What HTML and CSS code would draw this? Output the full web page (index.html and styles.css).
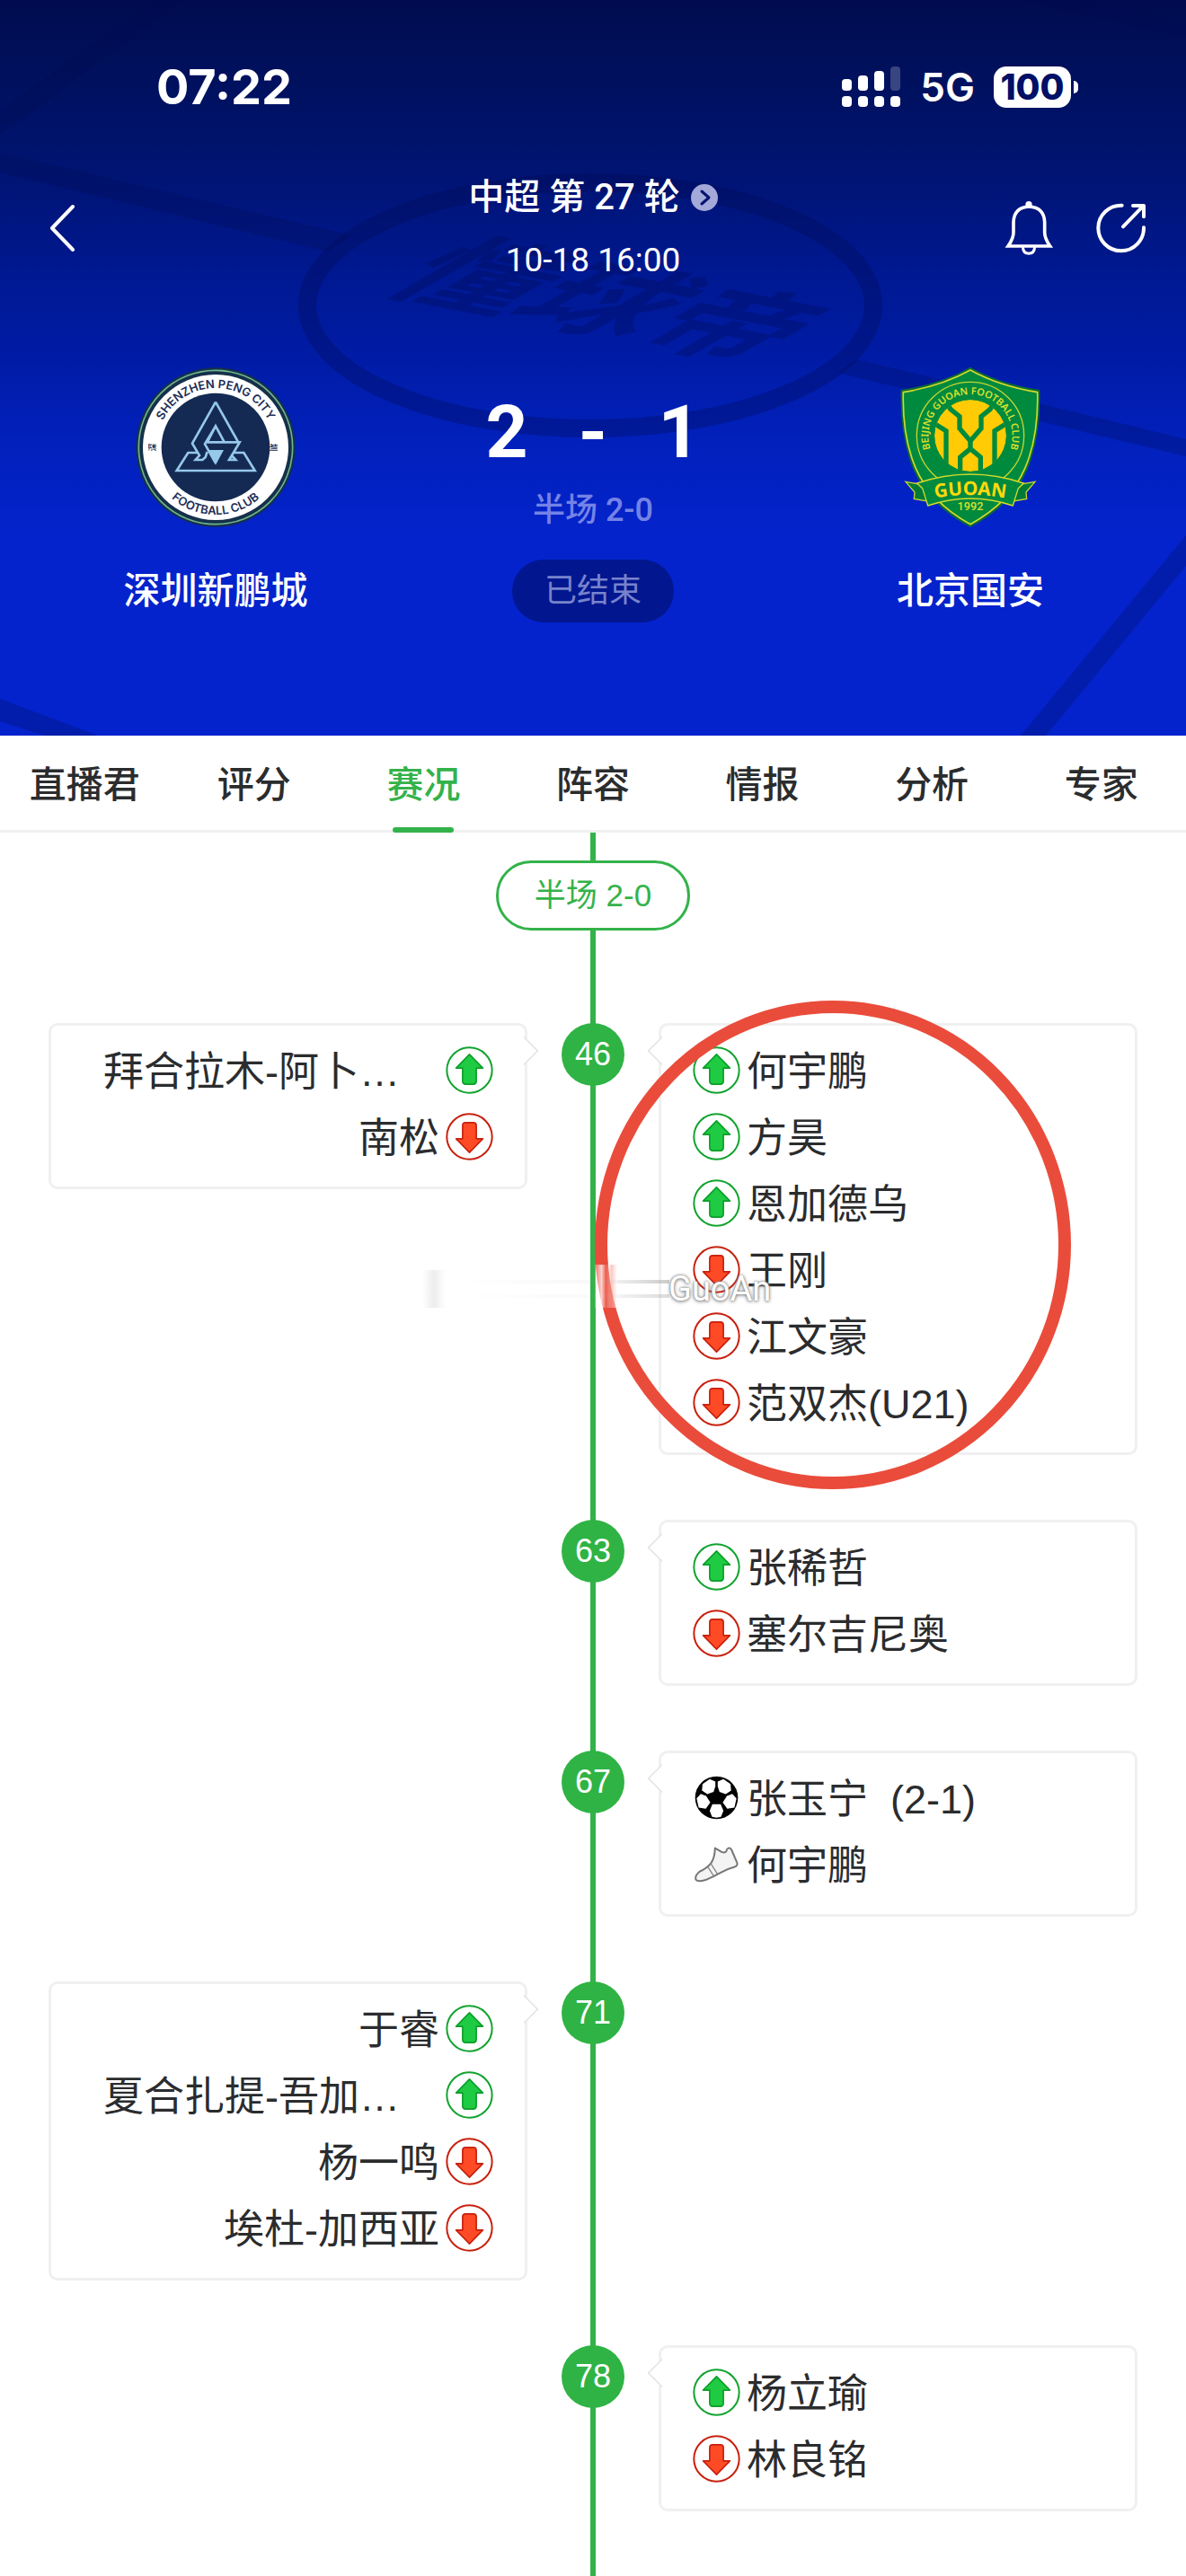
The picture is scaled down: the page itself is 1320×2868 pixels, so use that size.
FILE: index.html
```html
<!DOCTYPE html>
<html lang="zh-CN">
<head>
<meta charset="utf-8">
<meta name="viewport" content="width=device-width, initial-scale=1">
<title>深圳新鹏城 2-1 北京国安</title>
<link rel="stylesheet" href="styles.css">
</head>
<body>
<svg class="sprite" aria-hidden="true">
  <symbol id="sub-in" viewBox="0 0 160 160">
    <circle cx="80" cy="80" r="76" fill="#fff" stroke="#12a32f" stroke-width="6"/>
    <path d="M80 27 L125 73 H103 V117 Q103 127 93 127 H67 Q57 127 57 117 V73 H35 Z" fill="#1ecb43" stroke="#0c9f2a" stroke-width="5" stroke-linejoin="round"/>
  </symbol>
  <symbol id="sub-out" viewBox="0 0 160 160">
    <circle cx="80" cy="80" r="76" fill="#fff" stroke="#c8200e" stroke-width="6"/>
    <path d="M80 133 L125 87 H103 V43 Q103 33 93 33 H67 Q57 33 57 43 V87 H35 Z" fill="#ff4a26" stroke="#c8200e" stroke-width="5" stroke-linejoin="round"/>
  </symbol>
  <symbol id="goal" viewBox="0 0 160 160">
    <circle cx="80" cy="80" r="72" fill="#000"/>
    <g fill="#fff">
      <path d="M76 42 V26 L57 17 L33 34 L31 56 L49 68 L70 60 Z"/>
      <path d="M84 42 V26 L103 17 L127 34 L129 56 L111 68 L90 60 Z"/>
      <path d="M45 74 L27 67 L13 82 L20 113 L44 117 L59 96 Z"/>
      <path d="M115 74 L133 67 L147 82 L140 113 L116 117 L101 96 Z"/>
      <path d="M66 102 H94 L103 124 L95 144 L80 147 L65 144 L57 124 Z"/>
    </g>
  </symbol>
  <symbol id="assist" viewBox="0 0 160 160">
    <path d="M75 26 Q85 31 97 39 Q109 43 113 36 Q114 28 120 26 Q126 24 130 31 L149 75 Q152 85 141 89 Q115 96 94 108 Q70 122 43 133 Q15 141 10 131 Q7 118 23 105 Q48 94 62 76 Q74 58 75 26 Z" fill="#f4f4f4" stroke="#777" stroke-width="6" stroke-linejoin="round"/>
    <path d="M61 78 L83 113 M50 88 L70 119" fill="none" stroke="#888" stroke-width="4"/>
  </symbol>
</svg>

<header class="match">
  <svg class="pitch" viewBox="0 0 1320 819" preserveAspectRatio="xMidYMid slice" aria-hidden="true">
    <g class="pitch-lines">
      <path d="M172 0 H204 L0 150 V123 Z"/>
      <path d="M0 170 L391 262 L364 280 L0 192 Z"/>
      <path d="M1136 0 H1204 L1320 25 V42 Z"/>
      <path d="M953 400 L1320 489 V508 L932 415 Z"/>
      <path d="M1320 596 V630 L1164 819 H1136 Z"/>
      <path d="M0 778 L109 819 H50 L0 803 Z"/>
    </g>
    <ellipse class="pitch-circle" cx="657" cy="340" rx="315" ry="137"/>
    <text class="pitch-mark" transform="matrix(1.4 .27 -1.3 .75 420 322)">懂球帝</text>
  </svg>

  <div class="status">
    <span class="clock">07:22</span>
    <div class="status-right">
      <svg class="signal" viewBox="0 0 66 46" aria-label="信号">
        <g fill="#fff">
          <rect x="0" y="14" width="11" height="13" rx="4"/><rect x="18" y="10" width="11" height="17" rx="4"/><rect x="36" y="5" width="11" height="22" rx="4"/>
          <rect x="54" y="0" width="11" height="27" rx="4" opacity=".22"/>
          <rect x="0" y="33" width="11" height="12" rx="4"/><rect x="18" y="33" width="11" height="12" rx="4"/><rect x="36" y="33" width="11" height="12" rx="4"/><rect x="54" y="33" width="11" height="12" rx="4"/>
        </g>
      </svg>
      <span class="network">5G</span>
      <span class="battery">100</span>
    </div>
  </div>

  <div class="nav">
    <button class="icon-button icon-button-back" type="button" aria-label="返回">
      <svg class="icon-back" viewBox="0 0 30 54"><path d="M27 3 L4 27 L27 51" fill="none" stroke="#fff" stroke-width="4" stroke-linecap="round" stroke-linejoin="round"/></svg>
    </button>
    <div class="heading">
      <a class="round" href="#league">中超 第 27 轮
        <svg class="icon-more" viewBox="0 0 30 30" aria-hidden="true"><circle cx="15" cy="15" r="15" fill="#a3a9d8"/><path d="M12 8 L20 15 L12 22" fill="none" stroke="#07136f" stroke-width="3" stroke-linecap="round" stroke-linejoin="round"/></svg>
      </a>
      <time class="kickoff">10-18 16:00</time>
    </div>
    <div class="nav-actions">
      <button class="icon-button" type="button" aria-label="提醒">
        <svg class="icon-action" viewBox="54 66 180 180" fill="none" stroke="#fff" stroke-width="11">
          <path d="M66 216 Q84 190 84 170 V136 Q86 86 136 84 Q186 86 188 136 V170 Q188 190 206 216 Z"/>
          <path d="M115 218 Q116 241 135 241 Q154 241 155 218" stroke-width="9"/>
          <circle cx="135" cy="77" r="11" fill="#fff" stroke="none"/>
        </svg>
      </button>
      <button class="icon-button" type="button" aria-label="分享">
        <svg class="icon-action" viewBox="354 66 180 180" fill="none" stroke="#fff" stroke-width="12" stroke-linecap="round" stroke-linejoin="round">
          <path d="M446 80 A76 76 0 1 0 519 154 M450 151 L517 82 M483 81 H519 V118"/>
        </svg>
      </button>
    </div>
  </div>

  <div class="teams">
    <div class="team">
      <svg class="crest" viewBox="60 55 540 540" role="img" aria-label="Shenzhen Peng City">
        <defs><path id="sz-top" d="M132 325 A198 198 0 0 1 528 325"/><path id="sz-bottom" d="M105 325 A225 225 0 0 0 555 325"/></defs>
        <circle cx="330" cy="325" r="266" fill="#15304a"/>
        <circle cx="330" cy="325" r="257" fill="none" stroke="#6fb58c" stroke-width="5"/>
        <circle cx="330" cy="325" r="243" fill="#fff"/>
        <circle cx="330" cy="325" r="181" fill="#152a52"/>
        <g class="sz-text">
          <text><textPath href="#sz-top" startOffset="50%">SHENZHEN PENG CITY</textPath></text>
          <text><textPath href="#sz-bottom" startOffset="50%">FOOTBALL CLUB</textPath></text>
        </g>
        <text class="sz-cjk" transform="translate(130 325) rotate(-90)">深</text>
        <text class="sz-cjk" transform="translate(532 325) rotate(90)" dy="20">圳</text>
        <g fill="none" stroke="#96c8ec" stroke-width="8">
          <path d="M330 174 L252 312 L276 352 L263 367 H286 L296 358 L302 340 M330 174 L408 312 L375 367 H397 L384 352 L410 308 H302 L330 254 L358 306 M330 254 L294 314 L330 378"/>
          <path d="M270 343 H238 L200 403 H461 L424 343 H390"/>
        </g>
        <path d="M304 334 H357 L330 384 Z" fill="#96c8ec"/>
      </svg>
      <span class="team-name">深圳新鹏城</span>
    </div>
    <div class="result">
      <div class="score"><span>2</span><span>-</span><span>1</span></div>
      <span class="half">半场 2-0</span>
      <span class="state">已结束</span>
    </div>
    <div class="team">
      <svg class="crest" viewBox="30 55 540 540" role="img" aria-label="Beijing Guoan">
        <defs>
          <path id="ga-ring" d="M198 384 A140 140 0 1 1 402 384"/>
          <path id="ga-band" d="M150 502 Q300 466 450 502"/>
          <clipPath id="ga-ball"><circle cx="300" cy="286" r="120"/></clipPath>
        </defs>
        <path d="M300 57 Q395 112 532 133 Q536 290 490 400 Q440 518 300 592 Q160 518 110 400 Q64 290 68 133 Q205 112 300 57 Z" fill="#0a6b35"/>
        <path d="M300 67 Q395 120 524 141 Q528 290 482 396 Q432 510 300 582 Q168 510 118 396 Q72 290 76 141 Q205 120 300 67 Z" fill="#008a3e" stroke="#d2da2c" stroke-width="5"/>
        <circle cx="300" cy="286" r="179" fill="#008a3e" stroke="#c6d62f" stroke-width="4"/>
        <text class="ga-ring-text"><textPath href="#ga-ring" startOffset="50%">BEIJING GUOAN FOOTBALL CLUB</textPath></text>
        <g clip-path="url(#ga-ball)">
          <circle cx="300" cy="286" r="120" fill="#ffcb05"/>
          <g fill="none" stroke="#008a3e" stroke-width="16">
            <path d="M218 172 L234 198 L264 222 V262 L300 304 L336 262 V222 L366 198 L382 172"/>
            <path d="M300 300 V330 L266 358 V420 M300 330 L334 358 V420"/>
            <path d="M170 240 L219 270 V420 M430 240 L381 270 V420"/>
          </g>
        </g>
        <path d="M84 440 L140 450 L155 505 L112 497 L114 475 Z M516 440 L460 450 L445 505 L488 497 L486 475 Z" fill="#007a37" stroke="#c6d62f" stroke-width="4"/>
        <path d="M122 445 Q300 385 478 445 L460 462 L442 520 Q300 472 158 520 L140 462 Z" fill="#008a3e" stroke="#d2da2c" stroke-width="4"/>
        <text class="ga-name"><textPath href="#ga-band" startOffset="50%">GUOAN</textPath></text>
        <text class="ga-year" x="300" y="536">1992</text>
      </svg>
      <span class="team-name">北京国安</span>
    </div>
  </div>
</header>

<nav class="tabs">
  <a class="tab" href="#live">直播君</a>
  <a class="tab" href="#ratings">评分</a>
  <a class="tab tab-active" href="#events" aria-current="page">赛况</a>
  <a class="tab" href="#lineup">阵容</a>
  <a class="tab" href="#info">情报</a>
  <a class="tab" href="#analysis">分析</a>
  <a class="tab" href="#experts">专家</a>
</nav>

<main class="timeline" id="events">
  <div class="break">半场 2-0</div>
  <ol class="events">
    <li class="event">
      <ul class="card card-home">
        <li class="line"><span class="name name-clipped">拜合拉木-阿卜…</span><svg class="mark"><use href="#sub-in"/></svg></li>
        <li class="line"><span class="name">南松</span><svg class="mark"><use href="#sub-out"/></svg></li>
      </ul>
      <span class="minute">46</span>
      <ul class="card card-away">
        <li class="line"><svg class="mark"><use href="#sub-in"/></svg><span class="name">何宇鹏</span></li>
        <li class="line"><svg class="mark"><use href="#sub-in"/></svg><span class="name">方昊</span></li>
        <li class="line"><svg class="mark"><use href="#sub-in"/></svg><span class="name">恩加德乌</span></li>
        <li class="line"><svg class="mark"><use href="#sub-out"/></svg><span class="name">王刚</span></li>
        <li class="line"><svg class="mark"><use href="#sub-out"/></svg><span class="name">江文豪</span></li>
        <li class="line"><svg class="mark"><use href="#sub-out"/></svg><span class="name">范双杰(U21)</span></li>
        <li class="highlight">
          <svg class="ring" viewBox="0 0 530 545" aria-hidden="true"><ellipse cx="265" cy="272" rx="258" ry="265" fill="none" stroke="#ea4c3b" stroke-width="14"/></svg>
          <svg class="smear" viewBox="0 0 300 48" aria-hidden="true">
            <defs>
              <linearGradient id="streak"><stop offset="0" stop-color="#999" stop-opacity="0"/><stop offset=".7" stop-color="#999" stop-opacity=".08"/><stop offset="1" stop-color="#999" stop-opacity=".5"/></linearGradient>
              <linearGradient id="block"><stop offset="0" stop-color="#ccc" stop-opacity="0"/><stop offset=".5" stop-color="#ccc" stop-opacity=".35"/><stop offset="1" stop-color="#ccc" stop-opacity="0"/></linearGradient>
              <linearGradient id="veil"><stop offset="0" stop-color="#fff" stop-opacity=".2"/><stop offset=".3" stop-color="#fff" stop-opacity=".75"/><stop offset=".5" stop-color="#fff" stop-opacity=".1"/><stop offset=".75" stop-color="#f6a59c" stop-opacity=".6"/><stop offset="1" stop-color="#fff" stop-opacity=".5"/></linearGradient>
            </defs>
            <rect x="10" y="6" width="26" height="42" fill="url(#block)"/>
            <rect x="50" y="17" width="235" height="4" fill="url(#streak)"/>
            <rect x="50" y="33" width="235" height="4" fill="url(#streak)" opacity=".7"/>
            <rect x="202" y="0" width="25" height="48" fill="url(#veil)"/>
          </svg>
          <span class="signature">GuoAn</span>
        </li>
      </ul>
    </li>
    <li class="event">
      <span class="minute">63</span>
      <ul class="card card-away">
        <li class="line"><svg class="mark"><use href="#sub-in"/></svg><span class="name">张稀哲</span></li>
        <li class="line"><svg class="mark"><use href="#sub-out"/></svg><span class="name">塞尔吉尼奥</span></li>
      </ul>
    </li>
    <li class="event">
      <span class="minute">67</span>
      <ul class="card card-away">
        <li class="line"><svg class="mark"><use href="#goal"/></svg><span class="name">张玉宁&nbsp; (2-1)</span></li>
        <li class="line"><svg class="mark"><use href="#assist"/></svg><span class="name">何宇鹏</span></li>
      </ul>
    </li>
    <li class="event">
      <ul class="card card-home">
        <li class="line"><span class="name">于睿</span><svg class="mark"><use href="#sub-in"/></svg></li>
        <li class="line"><span class="name name-clipped">夏合扎提-吾加…</span><svg class="mark"><use href="#sub-in"/></svg></li>
        <li class="line"><span class="name">杨一鸣</span><svg class="mark"><use href="#sub-out"/></svg></li>
        <li class="line"><span class="name">埃杜-加西亚</span><svg class="mark"><use href="#sub-out"/></svg></li>
      </ul>
      <span class="minute">71</span>
    </li>
    <li class="event">
      <span class="minute">78</span>
      <ul class="card card-away">
        <li class="line"><svg class="mark"><use href="#sub-in"/></svg><span class="name">杨立瑜</span></li>
        <li class="line"><svg class="mark"><use href="#sub-out"/></svg><span class="name">林良铭</span></li>
      </ul>
    </li>
  </ol>
</main>
</body>
</html>
```
FILE: styles.css
```css
* { box-sizing: border-box; }

body {
  margin: 0;
  background: #fff;
  color: #2b2c2e;
  font-family: "Liberation Sans", "Noto Sans CJK SC", sans-serif;
}

a { color: inherit; text-decoration: none; }
ul, ol { margin: 0; padding: 0; list-style: none; }
svg { display: block; }
.sprite { display: none; }

/* Match header */
.match {
  position: relative;
  padding-bottom: 126px;
  overflow: hidden;
  color: #fff;
  font-family: Roboto, "Noto Sans CJK SC", sans-serif;
  background: linear-gradient(#000c4e 0, #001160 100px, #001474 200px, #001890 300px, #001ca6 400px, #0221bd 500px, #0423cc 600px);
}

.pitch { position: absolute; inset: 0; width: 100%; height: 100%; }
.pitch-lines { fill: #000a50; fill-opacity: .26; }
.pitch-circle { fill: none; stroke: #000a50; stroke-opacity: .3; stroke-width: 20; }
.pitch-mark {
  fill: #000a50;
  fill-opacity: .3;
  font: 700 100px "Noto Sans CJK SC", sans-serif;
}

.status {
  position: relative;
  display: flex;
  justify-content: space-between;
  padding: 65px 128px 54px 174px;
  line-height: 64px;
  font-family: Inter, sans-serif;
}
.clock { font-size: 54px; font-weight: 700; }
.status-right { display: flex; align-items: center; }
.signal { width: 66px; height: 46px; }
.network { margin: 0 21px; font-size: 44px; font-weight: 600; }
.battery {
  position: relative;
  width: 86px;
  border-radius: 14px;
  background: #fff;
  color: #001066;
  font-size: 39px;
  font-weight: 800;
  line-height: 46px;
  text-align: center;
}
.battery::after {
  content: "";
  position: absolute;
  top: 16px;
  right: -8px;
  width: 5px;
  height: 14px;
  border-radius: 0 5px 5px 0;
  background: #fff;
}

.nav {
  position: relative;
  display: grid;
  grid-template-columns: 1fr auto 1fr;
  align-items: center;
  padding: 0 42px;
}
.icon-button {
  padding: 0;
  border: 0;
  background: none;
  justify-self: start;
  cursor: pointer;
}
.icon-button-back { padding-left: 12px; }
.icon-back { width: 30px; height: 54px; }
.icon-action { width: 60px; height: 60px; }
.heading { display: flex; flex-direction: column; align-items: center; line-height: 70px; }
.round { display: flex; align-items: center; gap: 12px; padding-top: 2px; font-size: 40px; font-weight: 500; }
.icon-more { width: 30px; height: 30px; }
.kickoff { font-size: 37px; }
.nav-actions { display: flex; justify-content: flex-end; gap: 40px; }

.teams {
  position: relative;
  display: grid;
  grid-template-columns: 4fr 3fr 4fr;
  padding-top: 83px;
}
.team { display: flex; flex-direction: column; align-items: center; gap: 40px; }
.crest { width: 180px; height: 180px; }
.team-name { font-size: 41px; font-weight: 500; line-height: 60px; }
.result { display: flex; flex-direction: column; align-items: center; padding-top: 23px; }
.score {
  display: grid;
  grid-template-columns: repeat(3, 96px);
  font-size: 82px;
  font-weight: 700;
  line-height: 100px;
  text-align: center;
}
.half { margin-top: 12px; color: #7583e6; font-size: 36px; font-weight: 500; line-height: 50px; }
.state {
  margin-top: 30px;
  padding: 0 36px;
  border-radius: 35px;
  background: #02168f;
  color: #7783cc;
  font-size: 36px;
  line-height: 70px;
}

/* Lettering on the club crests */
.sz-text { fill: #1c2d55; font: 600 39px Inter, sans-serif; text-anchor: middle; }
.sz-cjk { fill: #1c2d55; font: 700 26px "Noto Sans CJK SC", sans-serif; text-anchor: middle; }
.ga-ring-text { fill: #dbe02a; font: 600 33px "Noto Sans", sans-serif; text-anchor: middle; }
.ga-name { fill: #ffd90a; font: 700 63px "Noto Sans", sans-serif; text-anchor: middle; }
.ga-year { fill: #dbe02a; font: 500 38px Roboto, sans-serif; text-anchor: middle; }

/* Section tabs */
.tabs {
  display: grid;
  grid-template-columns: repeat(7, 1fr);
  border-bottom: 3px solid #f0f0f0;
  font-size: 41px;
  font-weight: 500;
  line-height: 99px;
  text-align: center;
}
.tab { position: relative; padding-top: 6px; }
.tab-active { color: #34b24a; }
.tab-active::after {
  content: "";
  position: absolute;
  bottom: -3px;
  left: calc(50% - 34px);
  width: 68px;
  height: 6px;
  border-radius: 3px;
  background: #34b24a;
}

/* Event timeline */
.timeline {
  padding: 31px 54px 72px;
  background: linear-gradient(#34b24a, #34b24a) center / 6px 100% no-repeat;
}
.break {
  width: 216px;
  margin: 0 auto 103px;
  border: 3px solid #34b24a;
  border-radius: 39px;
  background: #fff;
  color: #34b24a;
  font-size: 35px;
  line-height: 72px;
  text-align: center;
}
.events { display: grid; gap: 72px; }
.event {
  display: grid;
  grid-template-columns: 1fr 146px 1fr;
  align-items: start;
}
.minute {
  grid-column: 2;
  grid-row: 1;
  justify-self: center;
  width: 70px;
  border-radius: 35px;
  background: #2fb344;
  color: #fff;
  font-size: 36px;
  line-height: 70px;
  text-align: center;
}
.card {
  position: relative;
  grid-row: 1;
  border: 3px solid #f0f0f0;
  border-radius: 10px;
  background: #fff;
}
.card::before {
  content: "";
  position: absolute;
  top: 16px;
  width: 20px;
  height: 20px;
  border: 2px solid #e6e6e6;
  background: #fff;
  clip-path: polygon(0 0, 100% 0, 100% 100%);
  transform: rotate(45deg);
}
.card-home { grid-column: 1; padding: 12px 35px 19px 58px; }
.card-home::before { right: -11px; }
.card-away { grid-column: 3; padding: 12px 35px 19px; }
.card-away::before { left: -11px; transform: rotate(225deg); }
.line { display: flex; align-items: center; gap: 7px; height: 74px; }
.card-home .line { justify-content: flex-end; }
.mark { flex: none; width: 53px; height: 53px; }
.name { padding-top: 6px; font-size: 45px; line-height: 74px; white-space: nowrap; }
.name-clipped { flex: 1; }

/* Hand-drawn ring and signature over the substitutions */
.ring { position: absolute; top: -28px; left: -74px; width: 530px; height: 545px; }
.smear { position: absolute; top: 266px; left: -276px; width: 300px; height: 48px; }
.signature {
  position: absolute;
  top: 268px;
  left: 8px;
  color: #fff;
  font: 38px/50px Roboto, sans-serif;
  text-shadow: 0 0 3px #777, 0 1px 4px #888;
}
```
